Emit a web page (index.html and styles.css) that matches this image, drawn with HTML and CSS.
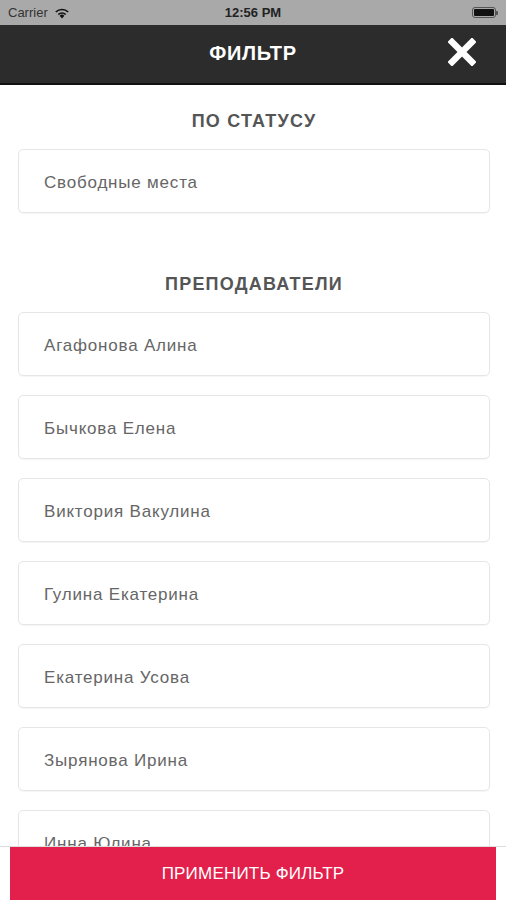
FILE: index.html
```html
<!DOCTYPE html>
<html lang="ru">
<head>
  <meta charset="UTF-8">
  <meta name="viewport" content="width=device-width, initial-scale=1.0">
  <title>Фильтр</title>
  <link rel="stylesheet" href="styles.css">
</head>
<body>
  <div class="status-bar">
    <div class="status-left">
      <span>Carrier</span>
      <svg class="wifi" width="16" height="12" viewBox="0 0 16 12">
        <path d="M8 11.5 L5.6 8.8 A3.4 3.4 0 0 1 10.4 8.8 Z" fill="#111"/>
        <path d="M3.7 6.9 A6.2 6.2 0 0 1 12.3 6.9 L11.1 8.1 A4.5 4.5 0 0 0 4.9 8.1 Z" fill="#111"/>
        <path d="M1.2 4.4 A9.8 9.8 0 0 1 14.8 4.4 L13.6 5.6 A8 8 0 0 0 2.4 5.6 Z" fill="#111"/>
      </svg>
    </div>
    <div class="status-time">12:56 PM</div>
    <div class="status-right">
      <div class="battery"><div class="battery-fill"></div></div>
      <div class="battery-tip"></div>
    </div>
  </div>

  <header class="top-bar">
    <h1>ФИЛЬТР</h1>
    <button class="close-btn" aria-label="Закрыть">
      <svg width="28" height="28" viewBox="0 0 28 28">
        <path d="M4 4 L24 24 M24 4 L4 24" stroke="#fff" stroke-width="6.5" stroke-linecap="square"/>
      </svg>
    </button>
  </header>

  <main class="filter-content">
    <section class="filter-section">
      <h2>ПО СТАТУСУ</h2>
      <div class="filter-item">Свободные места</div>
    </section>

    <section class="filter-section teachers">
      <h2>ПРЕПОДАВАТЕЛИ</h2>
      <div class="filter-item">Агафонова Алина</div>
      <div class="filter-item">Бычкова Елена</div>
      <div class="filter-item">Виктория Вакулина</div>
      <div class="filter-item">Гулина Екатерина</div>
      <div class="filter-item">Екатерина Усова</div>
      <div class="filter-item">Зырянова Ирина</div>
      <div class="filter-item">Инна Юлина</div>
    </section>
  </main>

  <div class="apply-bar">
    <button class="apply-button">ПРИМЕНИТЬ ФИЛЬТР</button>
  </div>
</body>
</html>
```

FILE: styles.css
```css
* {
  margin: 0;
  padding: 0;
  box-sizing: border-box;
}

body {
  width: 506px;
  height: 900px;
  overflow: hidden;
  position: relative;
  background-color: #fff;
  font-family: 'Liberation Sans', Arial, sans-serif;
}

.status-bar {
  height: 25px;
  background-color: #a9a9a9;
  display: flex;
  align-items: center;
  justify-content: space-between;
  padding: 0 8px;
  font-size: 13px;
  color: #333;
}

.status-left {
  display: flex;
  align-items: center;
  gap: 6px;
  width: 100px;
}

.status-time {
  font-weight: bold;
  color: #222;
}

.status-right {
  width: 100px;
  display: flex;
  justify-content: flex-end;
  align-items: center;
}

.battery {
  width: 24px;
  height: 11px;
  border: 1px solid #555;
  border-radius: 3px;
  padding: 1px;
}

.battery-fill {
  width: 100%;
  height: 100%;
  background-color: #111;
  border-radius: 1px;
}

.battery-tip {
  width: 2px;
  height: 4px;
  background-color: #555;
  border-radius: 0 1px 1px 0;
}

.top-bar {
  height: 60px;
  background-color: #2c2c2c;
  border-bottom: 2px solid #111;
  display: flex;
  align-items: center;
  justify-content: center;
  position: relative;
}

.top-bar h1 {
  color: #fff;
  font-size: 20px;
  font-weight: bold;
  letter-spacing: 0.7px;
  margin-top: -2px;
}

.close-btn {
  position: absolute;
  right: 30px;
  top: 13px;
  background: none;
  border: none;
  width: 28px;
  height: 28px;
}

.filter-content {
  padding: 0 16px 0 18px;
}

.filter-section h2 {
  text-align: center;
  font-size: 18px;
  font-weight: bold;
  color: #555;
  letter-spacing: 1.2px;
  padding: 26px 0 17px;
}

.teachers {
  margin-top: 35px;
}

.filter-item {
  height: 64px;
  border: 1px solid #e6e6e6;
  border-radius: 5px;
  box-shadow: 0 1px 1px rgba(0, 0, 0, 0.04);
  display: flex;
  align-items: center;
  padding: 3px 0 0 25px;
  font-size: 17px;
  color: #666;
  letter-spacing: 0.8px;
  margin-bottom: 19px;
}

.apply-bar {
  position: absolute;
  left: 0;
  right: 0;
  bottom: 0;
  height: 54px;
  background-color: #fff;
  border-top: 1px solid #ddd;
  padding: 0 10px;
}

.apply-button {
  width: 100%;
  height: 100%;
  background-color: #e31f4b;
  border: none;
  color: #fff;
  font-family: 'Liberation Sans', Arial, sans-serif;
  font-size: 17px;
  letter-spacing: 0.2px;
}
```
